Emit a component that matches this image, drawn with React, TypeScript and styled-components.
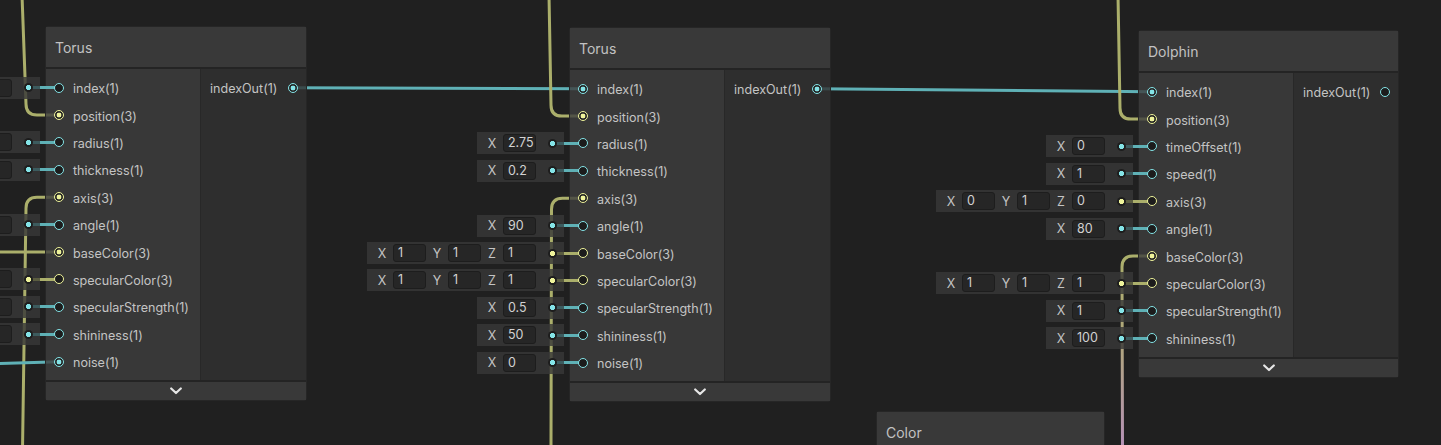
import React from 'react';
import styled, { createGlobalStyle } from 'styled-components';

type Kind = 'float' | 'vec3';

interface InputDef {
  label: string;
  kind: Kind;
  connected?: boolean;
  values?: string[];
}

interface OutputDef {
  label: string;
  kind: Kind;
  connected?: boolean;
}

interface NodeDef {
  id: string;
  title: string;
  x: number;
  y: number;
  width: number;
  inputWidth: number;
  inputs?: InputDef[];
  output?: OutputDef;
}

const PORT = { float: '#84e4e7', vec3: '#eef39a' };
const WIRE = { float: '#5fb1b6', vec3: '#abaf6b' };
const DIM = { float: '#3c5b5e', vec3: '#5a5c40' };

const ROW_H = 27.4;
const FIRST_ROW = 61.7; // from node top to first row centre
const PORT_X = 14; // from node left to port centre

const Global = createGlobalStyle`
  html, body {
    margin: 0;
    padding: 0;
    background: #202020;
  }
  body {
    font-family: Inter, "Noto Sans", "Liberation Sans", sans-serif;
    -webkit-font-smoothing: antialiased;
  }
`;

const Canvas = styled.div`
  position: relative;
  width: 1441px;
  height: 445px;
  overflow: hidden;
  background: #202020;
`;

const WireLayer = styled.svg`
  position: absolute;
  left: 0;
  top: 0;
  width: 1441px;
  height: 445px;
  z-index: 0;
`;

const NodeFrame = styled.div<{ $x: number; $y: number; $w: number }>`
  position: absolute;
  left: ${(p) => p.$x}px;
  top: ${(p) => p.$y}px;
  width: ${(p) => p.$w}px;
  box-sizing: border-box;
  border: 1px solid #262626;
  border-radius: 3px;
  display: flex;
  flex-direction: column;
  z-index: 1;
`;

const Title = styled.div`
  height: 40px;
  display: flex;
  align-items: center;
  padding-left: 9px;
  background: #393939;
  color: #c2c2c2;
  font-size: 14px;
  border-bottom: 2px solid #242424;
`;

const Body = styled.div`
  display: flex;
`;

const InputCol = styled.div<{ $w: number }>`
  width: ${(p) => p.$w}px;
  padding: 5px 0;
  background: rgba(62, 62, 62, 0.8);
`;

const OutputCol = styled.div`
  flex: 1;
  padding: 5px 0;
  background: rgba(50, 50, 50, 0.8);
  border-left: 1px solid #282828;
`;

const Row = styled.div`
  position: relative;
  height: ${ROW_H}px;
  display: flex;
  align-items: center;
`;

const PortCell = styled.div`
  position: relative;
  width: 27px;
  height: 100%;
  display: flex;
  align-items: center;
  flex: none;
`;

const PortRing = styled.div<{ $color: string; $connected: boolean }>`
  position: relative;
  z-index: 2;
  box-sizing: border-box;
  width: 10px;
  height: 10px;
  margin-left: 8px;
  border-radius: 50%;
  border: 1.5px solid ${(p) => p.$color};
  background: ${(p) =>
    p.$connected
      ? `radial-gradient(circle, ${p.$color} 0 2.1px, #242424 2.7px)`
      : '#1c1c1c'};
`;

const OutPortRing = styled(PortRing)`
  margin-left: 0;
  margin-right: 8px;
`;

const PortLabel = styled.span`
  color: #c4c4c4;
  font-size: 12.55px;
  white-space: nowrap;
  margin-top: 2px;
`;

const OutRow = styled(Row)`
  padding-left: 9px;
  justify-content: space-between;
`;

const Drawer = styled.div`
  position: absolute;
  right: 13px;
  top: 50%;
  transform: translateY(-50%);
  display: flex;
  align-items: center;
  z-index: 1;
`;

const DrawerBox = styled.div`
  height: 22px;
  box-sizing: border-box;
  padding-left: 9px;
  display: flex;
  align-items: center;
  gap: 5px;
  background: rgba(56, 56, 56, 0.82);
`;

const AxisLabel = styled.span`
  width: 12px;
  text-align: center;
  color: #c4c4c4;
  font-size: 12.5px;
`;

const ValueField = styled.div`
  width: 33px;
  height: 18px;
  box-sizing: border-box;
  padding-left: 4px;
  border: 1px solid #1d1d1d;
  border-radius: 3px;
  background: #262626;
  color: #d2d2d2;
  font-size: 12.5px;
  line-height: 16px;
  overflow: hidden;
  white-space: nowrap;
`;

const DotSlot = styled.div<{ $dim: string }>`
  position: relative;
  width: 23px;
  height: 100%;
  display: flex;
  align-items: center;
  &::before {
    content: '';
    position: absolute;
    left: 11px;
    right: 0;
    top: 50%;
    height: 3px;
    margin-top: -1.5px;
    background: ${(p) => p.$dim};
  }
`;

const ConnectorDot = styled.div<{ $color: string }>`
  position: relative;
  margin-left: 7px;
  width: 9px;
  height: 9px;
  border-radius: 50%;
  background: radial-gradient(circle, ${(p) => p.$color} 0 2.3px, #1d1d1d 2.9px);
`;

const Link = styled.div<{ $color: string }>`
  width: 20px;
  height: 3px;
  background: ${(p) => p.$color};
`;

const CollapseBar = styled.div`
  height: 18px;
  border-top: 2px solid #242424;
  background: #393939;
  display: flex;
  align-items: center;
  justify-content: center;
`;

const Chevron = () => (
  <svg width="12" height="8" viewBox="0 0 12 8">
    <polyline points="1.2,1.5 6,6 10.8,1.5" fill="none" stroke="#e6e6e6" strokeWidth="2.2" strokeLinecap="round" strokeLinejoin="round" />
  </svg>
);

const AXES = ['X', 'Y', 'Z'];

const InputDrawer: React.FC<{ input: InputDef }> = ({ input }) => (
  <Drawer>
    <DrawerBox>
      {input.values!.map((val, i) => (
        <React.Fragment key={i}>
          <AxisLabel>{AXES[i]}</AxisLabel>
          <ValueField>{val}</ValueField>
        </React.Fragment>
      ))}
      <DotSlot $dim={DIM[input.kind]}>
        <ConnectorDot $color={PORT[input.kind]} />
      </DotSlot>
    </DrawerBox>
    <Link $color={WIRE[input.kind]} />
  </Drawer>
);

const GraphNode: React.FC<{ def: NodeDef }> = ({ def }) => (
  <NodeFrame $x={def.x} $y={def.y} $w={def.width}>
    <Title>{def.title}</Title>
    {def.inputs && (
      <>
        <Body>
          <InputCol $w={def.inputWidth}>
            {def.inputs.map((inp) => (
              <Row key={inp.label}>
                <PortCell>
                  {inp.values && <InputDrawer input={inp} />}
                  <PortRing $color={PORT[inp.kind]} $connected={!!inp.connected} />
                </PortCell>
                <PortLabel>{inp.label}</PortLabel>
              </Row>
            ))}
          </InputCol>
          <OutputCol>
            {def.output && (
              <OutRow>
                <PortLabel>{def.output.label}</PortLabel>
                <OutPortRing $color={PORT[def.output.kind]} $connected={!!def.output.connected} />
              </OutRow>
            )}
          </OutputCol>
        </Body>
        <CollapseBar>
          <Chevron />
        </CollapseBar>
      </>
    )}
  </NodeFrame>
);

const f = (label: string, value?: string, connected?: boolean): InputDef => ({
  label,
  kind: 'float',
  connected,
  values: value !== undefined ? [value] : undefined,
});
const v = (label: string, values?: string[], connected?: boolean): InputDef => ({
  label,
  kind: 'vec3',
  connected,
  values,
});

const torusLeft: NodeDef = {
  id: 'torusA',
  title: 'Torus',
  x: 45,
  y: 26,
  width: 262,
  inputWidth: 154,
  inputs: [
    f('index(1)', '0'),
    v('position(3)', undefined, true),
    f('radius(1)', '2'),
    f('thickness(1)', '1'),
    v('axis(3)', undefined, true),
    f('angle(1)', '0'),
    v('baseColor(3)', undefined, true),
    v('specularColor(3)', ['1', '1', '1']),
    f('specularStrength(1)', '1'),
    f('shininess(1)', '5'),
    f('noise(1)', undefined, true),
  ],
  output: { label: 'indexOut(1)', kind: 'float', connected: true },
};

const torusMid: NodeDef = {
  id: 'torusB',
  title: 'Torus',
  x: 569,
  y: 27,
  width: 262,
  inputWidth: 154,
  inputs: [
    f('index(1)', undefined, true),
    v('position(3)', undefined, true),
    f('radius(1)', '2.75'),
    f('thickness(1)', '0.2'),
    v('axis(3)', undefined, true),
    f('angle(1)', '90'),
    v('baseColor(3)', ['1', '1', '1']),
    v('specularColor(3)', ['1', '1', '1']),
    f('specularStrength(1)', '0.5'),
    f('shininess(1)', '50'),
    f('noise(1)', '0'),
  ],
  output: { label: 'indexOut(1)', kind: 'float', connected: true },
};

const dolphin: NodeDef = {
  id: 'dolphin',
  title: 'Dolphin',
  x: 1138,
  y: 30,
  width: 261,
  inputWidth: 154,
  inputs: [
    f('index(1)', undefined, true),
    v('position(3)', undefined, true),
    f('timeOffset(1)', '0'),
    f('speed(1)', '1'),
    v('axis(3)', ['0', '1', '0']),
    f('angle(1)', '80'),
    v('baseColor(3)', undefined, true),
    v('specularColor(3)', ['1', '1', '1']),
    f('specularStrength(1)', '1'),
    f('shininess(1)', '100'),
  ],
  output: { label: 'indexOut(1)', kind: 'float', connected: false },
};

const colorNode: NodeDef = {
  id: 'color',
  title: 'Color',
  x: 876,
  y: 411,
  width: 229,
  inputWidth: 154,
};

const inPort = (n: NodeDef, i: number) => ({ x: n.x + PORT_X, y: n.y + FIRST_ROW + ROW_H * i });
const outPort = (n: NodeDef) => ({ x: n.x + n.width - PORT_X, y: n.y + FIRST_ROW });

// wire coming from above, turning right into a port
const fromTop = (x0: number, xv: number, p: { x: number; y: number }) =>
  `M ${x0} -5 L ${xv} ${p.y - 11} Q ${xv} ${p.y} ${xv + 11} ${p.y} L ${p.x} ${p.y}`;
// wire leaving a port to the left, turning down
const toBottom = (p: { x: number; y: number }, xv: number, x1: number) =>
  `M ${p.x} ${p.y} L ${xv + 11} ${p.y} Q ${xv} ${p.y} ${xv} ${p.y + 11} L ${x1} 450`;

const Wires: React.FC = () => {
  const a1 = inPort(torusLeft, 1);
  const a4 = inPort(torusLeft, 4);
  const a6 = inPort(torusLeft, 6);
  const a10 = inPort(torusLeft, 10);
  const b0 = inPort(torusMid, 0);
  const b1 = inPort(torusMid, 1);
  const b4 = inPort(torusMid, 4);
  const d0 = inPort(dolphin, 0);
  const d1 = inPort(dolphin, 1);
  const d6 = inPort(dolphin, 6);
  const ao = outPort(torusLeft);
  const bo = outPort(torusMid);
  return (
    <WireLayer viewBox="0 0 1441 445">
      <defs>
        <linearGradient id="colorWire" gradientUnits="userSpaceOnUse" x1="0" y1={d6.y} x2="0" y2="445">
          <stop offset="0" stopColor="#abaf6b" />
          <stop offset="0.45" stopColor="#b0a67c" />
          <stop offset="1" stopColor="#b592b6" />
        </linearGradient>
      </defs>
      <g fill="none" strokeWidth="3" strokeLinecap="butt">
        <path d={fromTop(22, 26, a1)} stroke={WIRE.vec3} />
        <path d={toBottom(a4, 26, 22.5)} stroke={WIRE.vec3} />
        <path d={`M -5 ${a6.y} L ${a6.x} ${a6.y}`} stroke={WIRE.vec3} />
        <path d={`M -5 ${a10.y + 2} L ${a10.x} ${a10.y}`} stroke={WIRE.float} />
        <path d={`M ${ao.x} ${ao.y} L ${b0.x} ${b0.y}`} stroke={WIRE.float} />
        <path d={fromTop(549, 551, b1)} stroke={WIRE.vec3} />
        <path d={toBottom(b4, 551.5, 551)} stroke={WIRE.vec3} />
        <path d={`M ${bo.x} ${bo.y} L ${d0.x} ${d0.y}`} stroke={WIRE.float} />
        <path d={fromTop(1118, 1120, d1)} stroke={WIRE.vec3} />
        <path d={toBottom(d6, 1122, 1122.5)} stroke="url(#colorWire)" />
      </g>
    </WireLayer>
  );
};

export default function App() {
  return (
    <>
      <Global />
      <Canvas>
        <Wires />
        <GraphNode def={torusLeft} />
        <GraphNode def={torusMid} />
        <GraphNode def={dolphin} />
        <GraphNode def={colorNode} />
      </Canvas>
    </>
  );
}
